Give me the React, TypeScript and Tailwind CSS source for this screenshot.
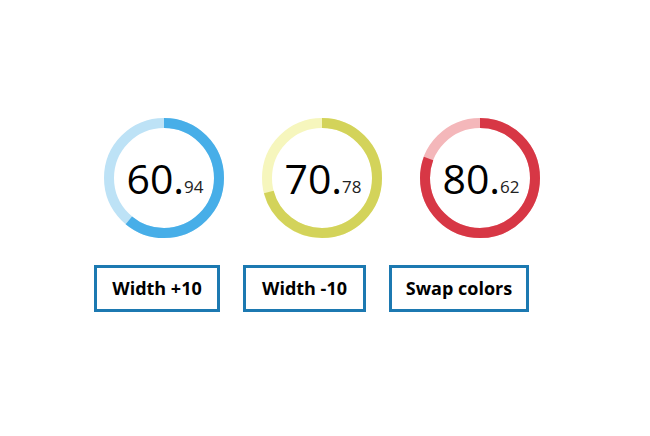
import React from "react";

type Ring = { value: number; dark: string; light: string };

const rings: Ring[] = [
  { value: 60.94, dark: "#47aee8", light: "#bde2f6" },
  { value: 70.78, dark: "#d3d35a", light: "#f6f6bd" },
  { value: 80.62, dark: "#d73745", light: "#f4b7ba" },
];

function Gauge({ value, dark, light }: Ring) {
  const r = 55;
  const c = 2 * Math.PI * r;
  const [whole, frac] = value.toFixed(2).split(".");
  return (
    <div className="relative h-[120px] w-[120px]">
      <svg width="120" height="120" viewBox="0 0 120 120" className="absolute inset-0">
        <circle cx="60" cy="60" r={r} fill="none" stroke={light} strokeWidth="10" />
        <circle
          cx="60"
          cy="60"
          r={r}
          fill="none"
          stroke={dark}
          strokeWidth="10"
          strokeDasharray={`${(c * value) / 100} ${c}`}
          transform="rotate(-90 60 60)"
        />
      </svg>
      <div className="absolute inset-0 flex items-center justify-center pl-[2px] pt-[1px]">
        <span className="text-[41px] leading-none text-black">{whole}.</span>
        <span className="mt-[15px] text-[17px] leading-none text-[#222]">{frac}</span>
      </div>
    </div>
  );
}

export default function App() {
  return (
    <main className="h-[436px] w-[650px] bg-white pt-[118px] font-['Open_Sans','Noto_Sans',sans-serif]">
      <section className="flex gap-[38px] pl-[104px]">
        {rings.map((g) => (
          <Gauge key={g.value} {...g} />
        ))}
      </section>

      <section className="mt-[27px] flex gap-[23px] pl-[94px]">
        <button className="h-[47px] w-[126px] border-[3px] border-[#1c79b1] text-[18px] font-bold text-black">
          Width +10
        </button>
        <button className="h-[47px] w-[123px] border-[3px] border-[#1c79b1] text-[18px] font-bold text-black">
          Width -10
        </button>
        <button className="h-[47px] w-[140px] border-[3px] border-[#1c79b1] text-[18px] font-bold text-black">
          Swap colors
        </button>
      </section>
    </main>
  );
}
